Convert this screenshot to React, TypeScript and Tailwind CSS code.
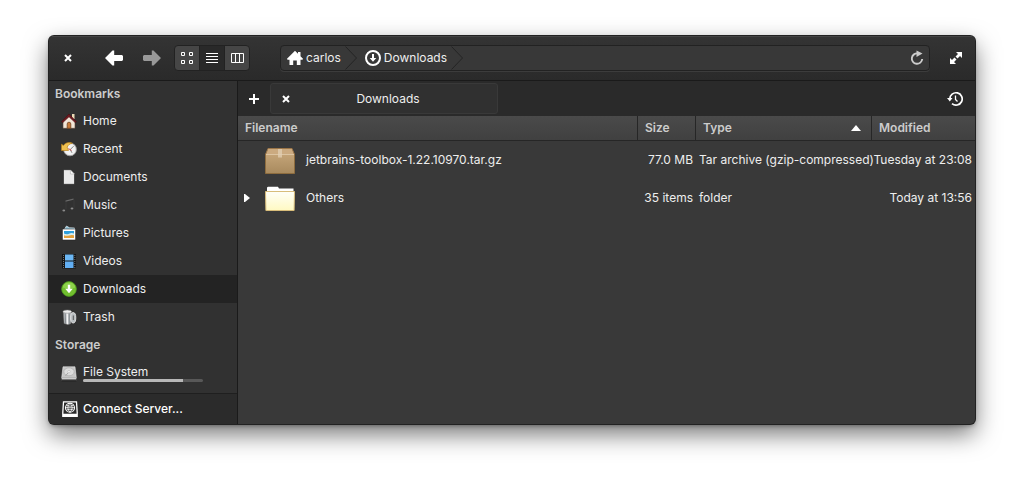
import React from "react";

type IconProps = { className?: string };

function HomeColor() {
  return (
    <svg className="size-4" viewBox="0 0 16 16">
      <rect x="11" y="1" width="2.5" height="5" fill="#ead9b5" />
      <path d="M2 8 8 2.500 14 8v7.300H2z" fill="#f2e6d8" stroke="#5a4438" strokeWidth=".6" />
      <path d="M6.200 15.300V11a1.800 1.800 0 0 1 3.600 0v4.300z" fill="#c97a3a" stroke="#70401c" strokeWidth=".8" />
      <path d="M.5 8.800 8 1l7.500 7.800-1.300.8L8 3.800 1.800 9.600z" fill="#6d1a20" stroke="#4a0d12" strokeWidth=".6" />
    </svg>
  );
}

function RecentColor() {
  return (
    <svg className="size-4" viewBox="0 0 16 16">
      <circle cx="9" cy="8.400" r="6.400" fill="#e8e8e8" stroke="#9a9a9a" strokeWidth=".8" />
      <circle cx="9" cy="8.400" r="5" fill="#f3f3f3" />
      <path d="m9.200 8.600 3.400-3.400M9.200 8.600l1.800 3.200" fill="none" stroke="#666" strokeWidth=".8" />
      <path d="m7.500 7.600 3 1.800" stroke="#d33" strokeWidth=".8" />
      <path d="M.5 3.200 2.400 4.400C4.500 1.600 8 .8 11.400 2.200 8.800 2.600 7 4 6.200 6.200L7.600 9.400.5 9.600z" fill="#efc050" stroke="#b8801a" strokeWidth=".7" />
    </svg>
  );
}

function DocumentColor() {
  return (
    <svg className="size-4" viewBox="0 0 16 16">
      <path d="M2.500.7h7.300l3.700 3.800v10.800h-11z" fill="#e9e9e9" stroke="#1b1b1b" strokeWidth=".6" />
      <path d="M9.400 1v4h3.900z" fill="#fff" stroke="#aaa" strokeWidth=".6" />
    </svg>
  );
}

function MusicColor() {
  return (
    <svg className="size-4" viewBox="0 0 16 16">
      <path d="M5 4.500v8M13 2.500v8.200" stroke="#3b3b3b" strokeWidth="1" />
      <path d="M4.500 3.400 12.500 1.400v1.300l-8 2z" fill="#686868" />
      <ellipse cx="2.800" cy="13.600" rx="1.400" ry="1" fill="#8a8a8a" />
      <ellipse cx="11" cy="11.600" rx="1.400" ry="1" fill="#8a8a8a" />
    </svg>
  );
}

function PicturesColor() {
  return (
    <svg className="size-4" viewBox="0 0 16 16">
      <path d="M3 5 5.500 1l3 1.800L13.500 3v3z" fill="#8fc3d8" stroke="#dceaf0" strokeWidth=".7" />
      <rect x="1.300" y="4" width="13.400" height="11" fill="#fff" stroke="#252525" strokeWidth=".6" />
      <rect x="3" y="6" width="10" height="4" fill="#2f9fdc" />
      <path d="M3 9.500h10V13H3z" fill="#e4a13c" />
      <path d="M3 8.500q2.500 1.500 5 .3t5-.3v1.800q-2.500-.6-5 .2t-5-.2z" fill="#d5eef0" />
    </svg>
  );
}

function VideosColor() {
  return (
    <svg className="size-4" viewBox="0 0 16 16">
      <rect x="1" y="1" width="14" height="14.500" fill="#141414" />
      <rect x="4" y="1.500" width="8.500" height="6" fill="#6cb7f4" />
      <rect x="4" y="8.500" width="8.500" height="6.500" fill="#62aef2" />
      <path d="M2.500 2v13M13.800 2v13" stroke="#6f6f6f" strokeWidth="1" strokeDasharray="1 1" />
    </svg>
  );
}

function DownloadsColor() {
  return (
    <svg className="size-4" viewBox="0 0 16 16">
      <circle cx="8" cy="8" r="7.400" fill="#72bf2f" stroke="#4c971e" strokeWidth=".8" />
      <path d="M1.600 6.500a6.600 6.600 0 0 1 12.800 0q-6.400 2-12.800 0z" fill="#8ed14b" />
      <path d="M6.800 3.800h2.400v4h2.600L8 12.200 4.200 7.800h2.600z" fill="#fff" />
    </svg>
  );
}

function TrashColor() {
  return (
    <svg className="size-4" viewBox="0 0 16 16">
      <path d="M2.300 3h8l-.5 11.500-2.300 1-4.400-1z" fill="#b9bdc0" stroke="#777" strokeWidth=".6" />
      <path d="M4.200 4.500l.4 10M8.300 4.500v10.500" stroke="#787e82" strokeWidth=".8" />
      <path d="m6.200 4.300.2 11" stroke="#f4f4f4" strokeWidth="1.400" />
      <ellipse cx="6.300" cy="2.600" rx="4.300" ry="1.600" fill="#ededed" stroke="#888" strokeWidth=".5" />
      <ellipse cx="12.200" cy="8.800" rx="2.600" ry="5.200" fill="#b8bdc0" stroke="#e4e4e4" strokeWidth=".9" />
      <path d="M12.300 6.500v4.500" stroke="#555" strokeWidth="1" />
    </svg>
  );
}

function DriveColor() {
  return (
    <svg className="size-4" viewBox="0 0 16 16">
      <path d="M2 .8h12l1.300 11H.7z" fill="#c6c6c6" stroke="#e4e4e4" strokeWidth=".6" />
      <ellipse cx="8" cy="5.800" rx="5.200" ry="4" fill="#dcdcdc" stroke="#b0b0b0" strokeWidth=".8" />
      <circle cx="8" cy="5.600" r="1.200" fill="#f5f5f5" stroke="#b0b0b0" strokeWidth=".5" />
      <path d="M7 7 4.500 9.800" stroke="#a5a5a5" strokeWidth="1" />
      <path d="M.7 11.500h14.600V15H.7z" fill="#777" />
      <path d="M.7 12.200h14.600" stroke="#f4f4f4" strokeWidth="1" />
      <path d="M.7 14.800h14.600" stroke="#181818" strokeWidth="1" />
    </svg>
  );
}

function ServerIcon() {
  return (
    <svg className="size-4" viewBox="0 0 16 16" fill="none" stroke="#fff">
      <path d="M1.500.8h13l.7 11v3.500H.8v-3.500z" strokeWidth="1.300" />
      <path d="M1 12.800h14v2.500H1z" fill="#fff" stroke="none" />
      <circle cx="8" cy="6.700" r="4.500" strokeWidth="1.100" />
      <path d="M3.500 6.700h9M4.500 4.400q3.500 1.600 7 0M4.500 9q3.500-1.600 7 0M8 2.200q-4.400 4.500 0 9M8 2.200q4.400 4.500 0 9" strokeWidth=".8" />
    </svg>
  );
}

function CloseIcon({ className }: IconProps) {
  return (
    <svg className={className} viewBox="0 0 8 8">
      <path d="m1 1 6 6M7 1 1 7" stroke="#fff" strokeWidth="2" />
    </svg>
  );
}

function ArrowIcon({ className }: IconProps) {
  return (
    <svg className={className} viewBox="0 0 18 16" fill="currentColor">
      <path d="M0 8 7.500.5h1.700V5H17l1 1v4l-1 1H9.200v4.500H7.500z" />
    </svg>
  );
}

function HomeSymbol() {
  return (
    <svg className="size-4" viewBox="0 0 16 16" fill="#fff">
      <path d="M8 .8 11 3.800V2h2.500v4.200L16 8.800l-.5 1H13.500V15H9.800v-4.500H6.200V15H2.500V9.800H.5l-.5-1z" />
    </svg>
  );
}

function DownloadSymbol() {
  return (
    <svg className="size-4" viewBox="0 0 16 16">
      <circle cx="8" cy="8" r="7" fill="none" stroke="#fff" strokeWidth="2" />
      <path d="M7 4h2v4h2.300L8 11.800 4.700 8H7z" fill="#fff" />
    </svg>
  );
}

function Chevron() {
  return (
    <svg className="h-6 w-3 shrink-0" viewBox="0 0 12 24" fill="none">
      <path d="m.5.500 11 11.500-11 11.500" stroke="#242424" />
    </svg>
  );
}

function PackageIcon() {
  return (
    <svg className="size-8" viewBox="0 0 32 32">
      <defs>
        <linearGradient id="box" x2="0" y2="1">
          <stop stopColor="#c4a478" />
          <stop offset="1" stopColor="#a88a5e" />
        </linearGradient>
      </defs>
      <path d="M4 4.500h24l2.500 6h-29z" fill="#cbaa80" stroke="#9b7547" />
      <path d="M1.500 10h29v19.500h-29z" fill="url(#box)" />
      <path d="M1.500 10v19.500h29V10" fill="none" stroke="#8d6c3e" />
      <path d="M2 10.500h28" stroke="#dcc4a2" />
      <path d="M14 5h4v8.500h-4z" fill="#e2cfb4" opacity=".75" />
    </svg>
  );
}

function FolderIcon() {
  return (
    <svg className="size-8" viewBox="0 0 32 32">
      <defs>
        <linearGradient id="folder" x2="0" y2="1">
          <stop stopColor="#fffff8" />
          <stop offset="1" stopColor="#fff9c2" />
        </linearGradient>
      </defs>
      <path d="M3 10V5.500l1-.8h10l1 1.800h14.500V10z" fill="#fff" />
      <path d="M1.500 9.500h29l-.4 19H1.900z" fill="url(#folder)" stroke="#d8bd7a" />
    </svg>
  );
}

const places = [
  { label: "Home", icon: <HomeColor /> },
  { label: "Recent", icon: <RecentColor /> },
  { label: "Documents", icon: <DocumentColor /> },
  { label: "Music", icon: <MusicColor /> },
  { label: "Pictures", icon: <PicturesColor /> },
  { label: "Videos", icon: <VideosColor /> },
  { label: "Downloads", icon: <DownloadsColor />, active: true },
  { label: "Trash", icon: <TrashColor /> },
];

function Header() {
  return (
    <header className="flex h-[45px] items-center border-b border-[#1a1a1a] bg-linear-to-b from-[#343434] to-[#2a2a2a] pr-[13px] shadow-[inset_0_1px_#454545]">
      <button aria-label="Close window" className="ml-[11px] grid size-4 place-items-center">
        <CloseIcon className="size-2" />
      </button>
      <button aria-label="Back" className="ml-7 text-white">
        <ArrowIcon className="h-4 w-5" />
      </button>
      <button aria-label="Forward" className="ml-[18px] text-[#999]">
        <ArrowIcon className="h-4 w-5 rotate-180" />
      </button>
      <div className="ml-3 flex h-[26px] w-[76px] overflow-hidden rounded-sm border border-[#222] bg-[#464646]">
        <button aria-label="Grid view" className="grid flex-1 place-items-center">
          <svg className="size-3" viewBox="0 0 12 12" fill="none" stroke="#fff">
            <path d="M.5.500h3v3h-3zM8.500.500h3v3h-3zM.5 8.500h3v3h-3zM8.500 8.500h3v3h-3z" />
          </svg>
        </button>
        <button aria-label="List view" className="grid flex-1 place-items-center border-x border-[#222] bg-[#292929]">
          <svg className="size-3" viewBox="0 0 12 12" stroke="#fff">
            <path d="M0 1.500h12M0 4.500h12M0 7.500h12M0 10.500h12" />
          </svg>
        </button>
        <button aria-label="Column view" className="grid flex-1 place-items-center">
          <svg className="h-3 w-[13px]" viewBox="0 0 13 12" fill="none" stroke="#fff">
            <path d="M.5 1.500h12v9H.5zM4.500 1v10M8.500 1v10" />
          </svg>
        </button>
      </div>
      <nav aria-label="Path" className="ml-[30px] flex h-[26px] flex-1 items-center rounded-sm border border-[#222] bg-[#383838] pl-1.5 shadow-[0_1px_#3c3c3c]">
        <a href="#carlos" className="flex items-center gap-[3px]"><HomeSymbol />carlos</a>
        <span className="ml-1"><Chevron /></span>
        <a href="#downloads" className="ml-2 flex items-center gap-[3px]"><DownloadSymbol />Downloads</a>
        <span className="ml-1"><Chevron /></span>
        <button aria-label="Reload" className="ml-auto mr-1">
          <svg className="size-4" viewBox="0 0 16 16">
            <path d="M9 3.500a5.200 5.200 0 1 0 4.200 5.500" fill="none" stroke="#ccc" strokeWidth="1.900" />
            <path d="M7.500.5 13.500 3.500 7.500 7z" fill="#ccc" />
          </svg>
        </button>
      </nav>
      <button aria-label="Maximize" className="ml-5">
        <svg className="size-3" viewBox="0 0 12 12" fill="#fff">
          <path d="M6 0h6v6l-2-2-2.500 2.500-2-2L8 2zM0 6l2 2 2.500-2.500 2 2L4 10l2 2H0z" />
        </svg>
      </button>
    </header>
  );
}

function Sidebar() {
  return (
    <aside className="flex w-[189px] shrink-0 flex-col border-r border-[#1a1a1a] bg-[#313131]">
      <h2 className="h-[26px] pl-1.5 font-semibold leading-[26px] text-[#ccc]">Bookmarks</h2>
      <ul>
        {places.map((p) => (
          <li key={p.label}>
            <a href={"#" + p.label.toLowerCase()} className={p.active ? "flex h-7 items-center gap-1.5 bg-[#232323] pl-3" : "flex h-7 items-center gap-1.5 pl-3"}>
              {p.icon}
              {p.label}
            </a>
          </li>
        ))}
      </ul>
      <h2 className="h-7 pl-1.5 font-semibold leading-7 text-[#ccc]">Storage</h2>
      <a href="#filesystem" className="flex items-end gap-1.5 pl-3 pt-1.5">
        <DriveColor />
        <span className="flex w-[120px] flex-col">
          <span className="h-3.5 leading-3.5">File System</span>
          <span className="h-[3px] overflow-hidden rounded-full bg-[#585858]">
            <span className="block h-full w-5/6 bg-[#b8b8b8]" />
          </span>
        </span>
      </a>
      <button className="mt-auto flex h-[31px] items-center gap-[5px] border-t border-[#1f1f1f] bg-[#2b2b2b] pl-[13px] font-medium text-white">
        <ServerIcon />
        Connect Server...
      </button>
    </aside>
  );
}

const th = "border-r border-b border-[#262626] px-[7px] text-left font-semibold text-[#ccc]";

function Files() {
  return (
    <table className="w-full table-fixed border-separate border-spacing-0">
      <colgroup>
        <col />
        <col className="w-[58px]" />
        <col className="w-44" />
        <col className="w-[103px]" />
      </colgroup>
      <thead>
        <tr className="h-[25px] bg-linear-to-b from-[#4a4a4a] to-[#404040]">
          <th className={th}>Filename</th>
          <th className={th}>Size</th>
          <th className={th}>
            <span className="flex items-center justify-between">
              Type
              <svg className="mr-[3px] h-1.5 w-2.5" viewBox="0 0 10 6"><path d="M5 0 10 6H0z" fill="#fff" /></svg>
            </span>
          </th>
          <th className="border-b border-[#262626] px-[7px] text-left font-semibold text-[#ccc]">Modified</th>
        </tr>
      </thead>
      <tbody className="whitespace-nowrap">
        <tr className="h-[38px]">
          <td>
            <span className="flex items-center pl-[26px]"><PackageIcon /><span className="ml-2.5">jetbrains-toolbox-1.22.10970.tar.gz</span></span>
          </td>
          <td className="pr-[3px] text-right">77.0 MB</td>
          <td className="pl-[3px]">Tar archive (gzip-compressed)</td>
          <td className="pr-[3px] text-right">Tuesday at 23:08</td>
        </tr>
        <tr className="h-[38px]">
          <td>
            <span className="flex items-center pl-1.5">
              <button aria-label="Expand Others" className="mr-3.5">
                <svg className="h-2 w-1.5" viewBox="0 0 6 8"><path d="M0 0h1l5 4-5 4H0z" fill="#fff" /></svg>
              </button>
              <FolderIcon /><span className="ml-2.5">Others</span>
            </span>
          </td>
          <td className="pr-[3px] text-right">35 items</td>
          <td className="pl-[3px]">folder</td>
          <td className="pr-[3px] text-right">Today at 13:56</td>
        </tr>
      </tbody>
    </table>
  );
}

export default function App() {
  return (
    <div className="flex min-h-screen flex-col bg-white px-[49px] pb-[62px] pt-9 font-['Inter',sans-serif] text-xs text-[#eee]">
      <div className="flex flex-1 flex-col overflow-hidden rounded-[5px] bg-[#393939] shadow-[0_0_0_1px_#222,0_2px_4px_rgba(0,0,0,.3),0_10px_24px_rgba(0,0,0,.55)]">
        <Header />
        <div className="flex flex-1">
          <Sidebar />
          <main className="min-w-0 flex-1">
            <div className="flex h-[35px] items-center bg-[#2a2a2a] pr-3">
              <button aria-label="New tab" className="ml-2.5">
                <svg className="block size-3" viewBox="0 0 12 12"><path d="M6 1v10M1 6h10" stroke="#fff" strokeWidth="2" /></svg>
              </button>
              <div className="ml-2.5 flex h-[31px] w-[228px] items-center rounded-[3px] border border-[#393939] bg-[#303030] px-[11px]">
                <button aria-label="Close tab"><CloseIcon className="size-2" /></button>
                <span className="flex-1 text-center">Downloads</span>
              </div>
              <button aria-label="Closed tabs" className="ml-auto">
                <svg className="size-4" viewBox="0 0 16 16" fill="none" stroke="#fff">
                  <path d="M2.800 8A6.200 6.200 0 1 1 5 12.700" strokeWidth="1.700" />
                  <path d="M0 7h5.500L2.800 10.500z" fill="#fff" stroke="none" />
                  <path d="M8.500 4.500v4l2 2" strokeWidth="1.300" />
                </svg>
              </button>
            </div>
            <Files />
          </main>
        </div>
      </div>
    </div>
  );
}
